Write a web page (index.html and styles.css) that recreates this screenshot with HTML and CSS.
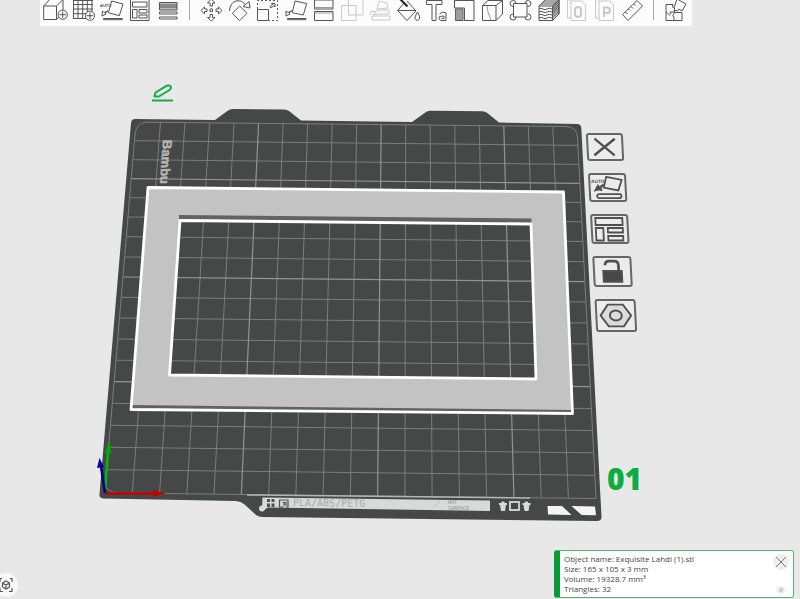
FILE: index.html
```html
<!DOCTYPE html>
<html lang="en">
<head>
<meta charset="utf-8">
<meta name="viewport" content="width=device-width, initial-scale=1">
<title>Plate editor</title>
<link rel="stylesheet" href="styles.css">
</head>
<body>
<div class="scene">
  <svg class="scene-art" viewBox="0 0 800 599" aria-hidden="true">
    <!-- build plate -->
    <path class="plate" d="M135 119L215 120L228 110.500Q230 109 233 109L284 109.500Q287 109.500 289 111L301 120.500L412 122L426 112Q428 110.800 431 110.800L482 111.200Q485 111.200 487 112.700L499 122.500L577 124Q581 124 581.300 128L601.500 517Q601.500 521 597 521L263 517Q258 517 255 514L244 504Q241 501.500 236 501L103 498.500Q99 498 99.500 494L131 123Q131.500 119 135 119Z"/>
    <path class="grid" d="M160.500 122L132.300 493M185 122L159.500 494M209.600 123L186.800 494M234.100 123L214 494M283.100 124L268.600 495M307.600 124L295.800 495M332.200 124L323.100 495M356.700 125L350.300 496M405.700 125L404.900 496M430.200 125L432.100 496M454.800 126L459.400 497M479.300 126L486.600 497M528.300 126L541.200 497M552.800 127L568.400 498M134.400 140.700L578 145.400M132.800 159.700L579 164.400M129.700 197.700L580.900 202.400M128 217L581.900 221.800M126.400 236.700L582.900 241.500M124.700 257L583.900 261.700M121.300 297.300L586 302M119.600 318L587 323M117.900 339L588.100 344M116.100 360.200L589.200 365M112.500 403.300L591.400 408.500M110.600 425.300L592.500 430.500M108.800 447.300L593.700 452.800M106.900 469.700L594.800 475.300"/>
    <path class="grid grid-major" d="M258.600 123L241.300 495M381.200 125L377.600 496M503.800 126L513.900 497M131.300 178.700L579.900 183.400M123 277L585 281.700M114.300 381.700L590.300 386.700"/>
    <path class="grid" d="M146 122.200L566 126.500Q577 127 577.500 137L596 498.500L116 493Q106 491 105.500 484L135 134Q136.500 123 146 122.200"/>
    <text class="plate-brand" transform="matrix(-.07 1 -1 .02 163 140)">Bambu</text>
    <!-- front label strip -->
    <path class="strip-line" d="M247 495L530 498"/>
    <path class="strip" d="M262.500 497.500L490 500.500L490 511L268 507.500L264 510L262 507Z"/>
    <circle class="strip" cx="262" cy="508.500" r="3"/>
    <path class="ink" d="M267 499h3v3h-3zM271.500 499h3v3h-3zM267 503.500h3v3.500h-3zM271.500 503.500h3v3.500h-3z"/>
    <path class="ink-line" d="M284 507H279.500V500H288V507H286M282.500 502.500H286V505H284V503"/>
    <text class="strip-text" transform="matrix(1 .012 0 1 293 506)">PLA/ABS/PETG</text>
    <path class="strip-mark" d="M434 507L440 501"/>
    <text class="strip-note" x="448" y="504">HOT</text>
    <text class="strip-note" x="448" y="510">SURFACE</text>
    <path class="strip" d="M499 503h2l1-1.500h2l1 1.500h2v2h-1l-1 6h-4l-1-6h-1zM522.500 503h2l1-1.500h2l1 1.500h2v2h-1l-1 6h-4l-1-6h-1z"/>
    <rect class="strip-box" x="510" y="502" width="9" height="8"/>
    <path class="white" d="M547.500 506H562L571.500 515L548 514.500ZM571.500 506L595 506.500L596 515.300L581.500 515Z"/>
    <!-- model -->
    <path class="model" fill-rule="evenodd" d="M148 187.500L563.500 192L572.500 413.500L131 409.500ZM180 220.500L169.500 375L536 379L531 224Z"/>
    <path class="shade" d="M179 215L531.500 218.500V223L179 219.500ZM132 405L571.500 410V413L132 408.500Z"/>
    <path class="outline" d="M148 187.500L563.500 192L572.500 413.500L131 409.500ZM180 220.500L169.500 375L536 379L531 224Z"/>
    <!-- origin axes -->
    <g class="axes">
      <path stroke="#00b80c" d="M105 491L108 452"/><path fill="#00a80c" d="M105 453L109 441L111.500 453Z"/>
      <path stroke="#c50000" d="M105 493.500H154"/><path fill="#c50000" d="M153 490L165.500 493.500L153 497Z"/>
      <path stroke="#000090" d="M105 493L101 466"/><path fill="#0000a0" d="M97 468L99.500 458L104 467Z"/>
    </g>
    <text class="plate-number" x="607" y="490">01</text>
  </svg>

  <button class="rename" aria-label="Rename plate">
    <svg viewBox="0 0 22 18"><path d="M2.500 12.500L3.500 8.500L14.500 1.800Q17.500 .800 18.800 2.500Q19.500 4.500 17.500 6L7 12.500ZM0 16.500H21"/></svg>
  </button>

  <nav class="plate-tools" aria-label="Plate">
    <button class="size-1" aria-label="Remove plate"><svg viewBox="2 2 34 26"><path class="bold" d="M8 6L29 24M30 6L7 24"/></svg></button>
    <button class="size-2" aria-label="Auto orient"><svg viewBox="2 2 34 26"><path d="M18 4L34 7L30 18L15 15ZM9 22H32Q34 24 32 26H9Q6 24 9 22"/><path class="solid" d="M6 18L9 13L10 15L15 12L11 16L13 18L10 17Z"/><text x="2" y="10">AUTO</text></svg></button>
    <button class="size-3" aria-label="Arrange"><svg viewBox="2 2 34 26"><path d="M5 4H32V11H5ZM5 14H12.500V26.500H5ZM17 14H32V18.500H17ZM17 22H32V26.500H17Z"/></svg></button>
    <button class="size-4" aria-label="Lock plate"><svg viewBox="2 2 34 26"><path class="solid" d="M10 14.500H28V25H10Z"/><path class="bold" d="M12 9Q12 5 16 5H21Q25 5 25 9V14"/></svg></button>
    <button class="size-5" aria-label="Plate settings"><svg viewBox="2 2 34 26"><path class="nut" d="M12 5H26L33 15L26 25H12L5 15Z"/><ellipse cx="19" cy="15" rx="5.500" ry="4.500"/></svg></button>
  </nav>
</div>

<header class="toolbar" role="toolbar" aria-label="Tools">
  <button aria-label="Add object"><svg viewBox="0 0 28 26"><path d="M2.700 6H15.500V19.500H2.700ZM2.700 6L9 -1M15.500 6L22 -.500V10M15.500 19.500L18 17"/><circle class="paper" cx="21.700" cy="14.700" r="4.600"/><path d="M21.700 11.500V18M18.500 14.700H25"/></svg></button>
  <button aria-label="Add plate"><svg viewBox="0 0 28 26"><path d="M4.500 -1V18.500M9 -1V18.500M13.700 -1V18.500M18.300 -1V18.500M23 -1V12M4 .500H24M4 4.500H24M4 9H24M4 13.700H20M4 18.500H20"/><circle class="paper" cx="21" cy="15.700" r="4.600"/><path d="M21 12.500V19M17.700 15.700H24.300"/></svg></button>
  <button aria-label="Auto orient"><svg viewBox="0 0 28 26"><path d="M14.700 1L26 4L22.300 15.700L11.300 12.700ZM6.500 18.500H25.300V19.700H6.500ZM5 16L5.500 11L7 12.500L11 11M5 16L9 14L8 13L11 11"/><text x="3" y="7">AUTO</text></svg></button>
  <button aria-label="Arrange all"><svg viewBox="0 0 28 26"><path d="M5.500 -1H24V20.500H5.500ZM7.500 2H22V7H7.500ZM7.500 9.500H12V18H7.500ZM14 9.500H22V13H14ZM14 15H22V18H14Z"/></svg></button>
  <button aria-label="Layer height"><svg viewBox="0 0 28 26"><path class="gray" d="M6.500 2.500H24V10H6.500Z"/><path d="M6.500 -.500H24M6.500 2.500H24M6.500 5H24M6.500 7H24M6.500 12H24V14H6.500ZM6.500 17H24V19H6.500Z"/></svg></button>
  <span class="divider"></span>
  <button aria-label="Move"><svg viewBox="0 0 28 26"><path d="M13 9H15.500V11.500H13ZM14.300 -1L18 3H15.500V6H13V3H10.500ZM14.300 21L18 17.500H15.500V14.500H13V17.500H10.500ZM4 10.300L7.500 7V9H10V11.500H7.500V14ZM25 10.300L21.500 7V9H19V11.500H21.500V14Z"/></svg></button>
  <button aria-label="Rotate"><svg viewBox="0 0 28 26"><path d="M14.700 6L22 13.300L14.700 20.700L7.300 13.300ZM4.500 11Q5 2 12 .700Q17 0 20.500 4.500M18 6.500L25 8L24 1.500Z"/></svg></button>
  <button aria-label="Scale"><svg viewBox="0 0 28 26"><path d="M4.500 9.500H15.500V20.500H4.500ZM17 6.500L20 4L18.500 3.500H22V7L21 5.500L18 8Z"/><path class="dash" d="M4.500 9V.500H24.500V20.500H16"/></svg></button>
  <button aria-label="Lay flat"><svg viewBox="0 0 28 26"><path d="M14 1L25.700 3.500L22.300 15L11.300 12.700ZM6.500 18.500H25V19.700H6.500ZM5 16L5 11L7 12.500L11 10.500M5 16L9 14L8 13L11 10.500"/></svg></button>
  <button aria-label="Cut"><svg viewBox="0 0 28 26"><path d="M5.500 0H24V9H5.500ZM5.500 11.500H24V20.500H5.500Z"/><path class="light" d="M5.500 7.500H24M5.500 13H24"/></svg></button>
  <button aria-label="Mesh boolean" disabled><svg viewBox="0 0 28 26"><path d="M4.500 5.500H19V20.500H4.500ZM11.500 -1H26V15H11.500Z"/></svg></button>
  <button aria-label="Supports" disabled><svg viewBox="0 0 28 26"><path d="M14 1L22 3L23 8L12 9ZM8 15L12 10H24V14H14ZM7 16H25V20H7ZM5 15L6 11L11 12"/></svg></button>
  <button aria-label="Paint"><svg viewBox="0 0 28 26"><path d="M12 2L4.700 10.500L14 20.500L23 11L14 1M5 10.500H22.500M24.500 12Q21.500 17 22 18.500Q24 22 26.500 19Q27.500 17 24.500 12"/><path class="brush" d="M7 -1L14.500 6.500"/></svg></button>
  <button aria-label="Text"><svg viewBox="0 0 28 26"><path d="M5.500 .500H21V4.500H15V20.500H11V4.500H5.500ZM18.500 14Q22 10.500 25 13V20.500H19.500Q17 19 18.500 16.500L23 16M20.500 18.500H23V16"/></svg></button>
  <button aria-label="Height range"><svg viewBox="0 0 28 26"><path d="M5.500 .500H25V20.500H15.500V8H5.500Z"/><path class="hatch" d="M6.500 9H14V20.500H6.500Z"/><path class="light" d="M8 9V20M10 9V20M12 9V20M6.500 11H14M6.500 13.500H14M6.500 16H14M6.500 18.500H14"/></svg></button>
  <button aria-label="Seam"><svg viewBox="0 0 28 26"><path d="M5.500 5.500H19V20.500H5.500ZM5.500 5.500L11 .500H25.500V14L19 20.500M19 5.500L25.500 .500"/><path class="light" d="M10 6L11 12L14 20"/></svg></button>
  <button aria-label="Mesh edit"><svg viewBox="0 0 28 26"><path d="M8.500 3.500H22V17H8.500Z"/><path d="M8 6.500A3 3 0 1 1 11 3M20 3A3 3 0 1 1 22.500 6.500M22.500 14A3 3 0 1 1 20 17M11 17A3 3 0 1 1 8 14"/></svg></button>
  <button aria-label="Fuzzy skin"><svg viewBox="0 0 28 26"><path class="gray" d="M19.500 6L26 0V14L19.500 20.500Z"/><path d="M6 6H19.500V20.500H6ZM6 6L12 0H26V14L19.500 20.500M19.500 6L26 0M6 9Q8 7.500 10 9T14 9T19 9M6 12Q8 10.500 10 12T14 12T19 12M6 15Q8 13.500 10 15T14 15T19 15M6 18Q8 16.500 10 18T14 18T19 18M19.500 8L26 2M19.500 10L26 4M19.500 12L26 6M19.500 14L26 8M19.500 17L26 11M8 4H22M10 2H24"/></svg></button>
  <button aria-label="Object options" disabled><svg viewBox="0 0 28 26"><path d="M10 1H21L24.500 5V20.500H10ZM10 18H6.500V0H10"/><path class="heavy" d="M14 10Q14 7 17 7T20 10V14Q20 17 17 17T14 14Z"/></svg></button>
  <button aria-label="Part options" disabled><svg viewBox="0 0 28 26"><path d="M10 1H21L24.500 5V20.500H10ZM10 18H6.500V0H10"/><path class="heavy" d="M15 17V7.500H18Q21 8 21 10.500T18 13H15"/></svg></button>
  <button aria-label="Measure"><svg viewBox="0 0 28 26"><path d="M5.500 14.500L20 .500L25.500 6L11 20.500ZM8.500 12L10.500 14M11.500 9L13 10.500M14 6.500L16 8.500M17 4L18.500 5.500"/></svg></button>
  <span class="divider"></span>
  <button aria-label="Assembly view"><svg viewBox="0 0 28 26"><path d="M5 4.500H12Q10.500 8 13.500 8V12H9Q11 14 8.500 15L5 12ZM5 12V20.500H13V17Q10 16 13 14V12.500H21V20.500H13M13 8L16 -1L25 4L21 11L18 9Q17 12 15 10.500L13 11"/></svg></button>
</header>

<footer class="overlay">
  <button class="view-button" aria-label="Fit view"><svg viewBox="0 0 24 24"><path d="M8 5.500H6V9M16 5.500H18V9M6 15V18.500H9M18 15V18.500H15M12 8L15.500 10V14L12 16L8.500 14V10ZM8.500 10L12 12L15.500 10M12 12V16"/></svg></button>
  <section class="info" aria-label="Object information">
    <p>Object name: Exquisite Lahdi (1).stl<br>Size: 165 x 105 x 3 mm<br>Volume: 19328.7 mm³<br>Triangles: 32</p>
    <div class="info-actions">
      <button class="close" aria-label="Close"><svg viewBox="0 0 16 16"><path d="M3 3L13 13M13 3L3 13"/></svg></button>
      <button class="more" aria-label="Collapse"><svg viewBox="0 0 8 8"><path d="M1.500 4H6.500M3 2.500H5M3 5.500H5"/></svg></button>
    </div>
  </section>
</footer>
</body>
</html>
```
FILE: styles.css
```css
* { box-sizing: border-box; }

body {
  margin: 0;
  min-height: 100vh;
  position: relative;
  display: flex;
  flex-direction: column;
  justify-content: space-between;
  background: #e8e8e8;
  overflow: hidden;
  font-family: "Open Sans", "Noto Sans", sans-serif;
}

button {
  padding: 0;
  border: 0;
  background: none;
  font: inherit;
}

button svg { display: block; width: 100%; height: 100%; }

svg path, svg circle, svg ellipse { fill: none; }

/* 3D scene */
.scene {
  position: absolute;
  top: 0;
  left: 0;
  width: 100%;
  aspect-ratio: 800 / 599;
}
.scene-art { display: block; width: 100%; height: 100%; }
.scene-art .plate { fill: #464847; }
.scene-art .grid { stroke: #7c7e7d; stroke-width: 1; }
.scene-art .grid-major { stroke: #929493; stroke-width: 1.2; }
.scene-art .model { fill: #c3c3c3; }
.scene-art .shade { fill: #626262; }
.scene-art .outline { stroke: #fff; stroke-width: 2.8; stroke-linejoin: round; }
.scene-art .strip { fill: #d8dada; }
.scene-art .strip-line { stroke: #b4b6b5; stroke-width: 1.5; }
.scene-art .strip-box { fill: none; stroke: #d8dada; stroke-width: 1.8; }
.scene-art .strip-mark { stroke: #bbb; }
.scene-art .ink { fill: #505251; }
.scene-art .ink-line { stroke: #505251; stroke-width: 1.2; }
.scene-art .white { fill: #f4f4f4; }
.axes path[stroke] { stroke-width: 2.6; }
.axes path[fill="#00a80c"] { fill: #00a80c; }
.axes path[fill="#c50000"] { fill: #c50000; }
.axes path[fill="#0000a0"] { fill: #0000a0; }
.plate-brand {
  font: bold 13px "Liberation Sans", sans-serif;
  fill: #b4b6b5;
  stroke: #b4b6b5;
  stroke-width: .5;
}
.plate-number { font: 800 30px "Open Sans", sans-serif; fill: #0bac41; }
.strip-text { font: 10px "DejaVu Sans Mono", monospace; fill: #a8aaa9; }
.strip-note { font: 5px "DejaVu Sans Mono", monospace; fill: #8c8e8d; }

.rename {
  position: absolute;
  left: 19%;
  top: 14%;
  width: 22px;
  height: 18px;
}
.rename path { stroke: #16ac48; stroke-width: 2; stroke-linejoin: round; }

.plate-tools {
  position: absolute;
  left: 73.9%;
  top: 22.2%;
  display: flex;
  flex-direction: column;
  gap: 12px;
  transform: skewX(3deg);
}
.plate-tools button {
  border: 2px solid #666;
  border-radius: 3px;
  background: #ececec;
}
.plate-tools path, .plate-tools ellipse { stroke: #505050; stroke-width: 1.8; }
.plate-tools .bold { stroke-width: 2.6; }
.plate-tools .solid { fill: #484848; }
.plate-tools .nut { fill: #dcdcdc; }
.plate-tools text { font: bold 5px "Liberation Sans", sans-serif; fill: #505050; }
.size-1 { width: 37px; height: 28px; }
.size-2 { width: 38px; height: 29px; }
.size-3 { width: 38px; height: 30px; }
.size-4 { width: 39px; height: 31px; }
.size-5 { width: 41px; height: 33px; }

/* top toolbar */
.toolbar {
  position: relative;
  display: flex;
  align-self: flex-start;
  height: 26px;
  margin-left: 40px;
  padding: 0 3px 0 1px;
  background: #fcfcfc;
}
.toolbar button { width: 28px; height: 26px; }
.toolbar path, .toolbar circle { stroke: #555; stroke-width: 1; }
.toolbar button:disabled { opacity: .3; }
.toolbar .paper { fill: #fcfcfc; }
.toolbar .gray { fill: #bbb; }
.toolbar .hatch { fill: #aaa; }
.toolbar .light { stroke: #999; }
.toolbar .dash { stroke-dasharray: 2 2; }
.toolbar .brush { stroke: #222; stroke-width: 2; }
.toolbar .heavy { stroke-width: 2; }
.toolbar text { font: bold 4px "Liberation Sans", sans-serif; fill: #555; }
.divider {
  width: 16px;
  height: 20px;
  background: linear-gradient(#aaa, #aaa) center / 1px 100% no-repeat;
}

/* bottom overlay */
.overlay {
  position: relative;
  display: flex;
  justify-content: space-between;
  align-items: flex-end;
  padding: 0 6px 1px 0;
}
.view-button {
  width: 24px;
  height: 24px;
  margin: 0 0 1px -6px;
  border-radius: 50%;
  background: #f9f9f9;
}
.view-button path { stroke: #555; stroke-width: 1.2; }
.info {
  display: flex;
  justify-content: space-between;
  width: 240px;
  padding: 3px 4px;
  border: 1px solid #55b96c;
  border-left: 6px solid #0a9c34;
  border-radius: 3px;
  background: #fff;
}
.info p {
  margin: 0;
  font-size: 8px;
  line-height: 10px;
  color: #444;
}
.info-actions {
  display: flex;
  flex-direction: column;
  align-items: center;
  justify-content: space-between;
}
.close {
  width: 16px;
  height: 16px;
  border-radius: 50%;
  background: #eee;
}
.close path { stroke: #777; }
.more {
  width: 8px;
  height: 8px;
  border-radius: 50%;
  background: #eee;
}
.more path { stroke: #bbb; }
```
